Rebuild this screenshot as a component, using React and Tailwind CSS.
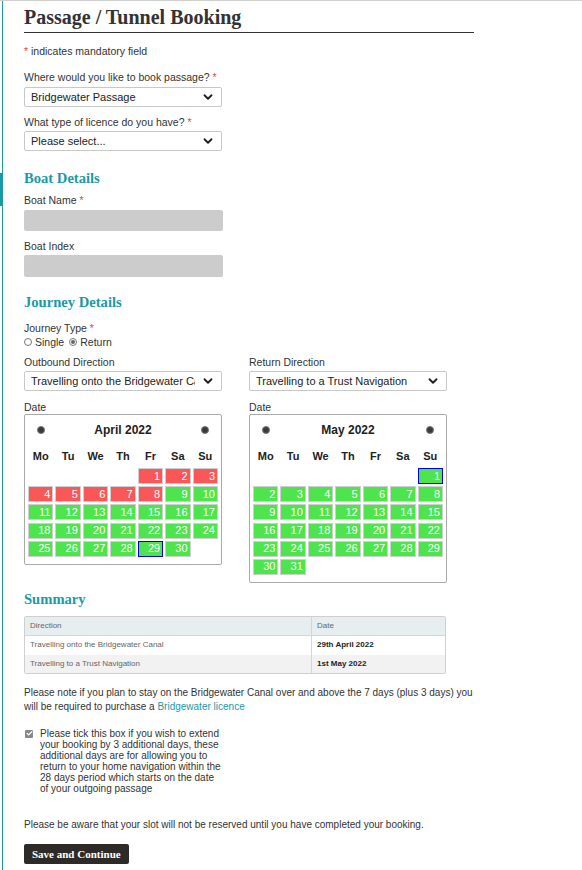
import { ChevronDown, Check } from "lucide-react";

const sans = { fontFamily: '"Liberation Sans", Arial, sans-serif' };
const serif = { fontFamily: '"Liberation Serif", "Times New Roman", serif' };

const Req = () => <span className="text-[#e4444c]">*</span>;

const Select = ({ value, className = "" }) => (
  <div
    className={`flex items-center justify-between h-[20px] border border-[#c8c8c8] rounded-[2px] bg-white pl-[6px] pr-[6px] text-[11px] text-[#222] ${className}`}
  >
    <span className="overflow-hidden whitespace-nowrap">{value}</span>
    <ChevronDown size={14} strokeWidth={3.2} className="shrink-0 text-[#222] ml-[6px]" />
  </div>
);

const NavDot = () => (
  <span className="inline-block w-[8px] h-[8px] rounded-full bg-[#3a3a3a] border border-[#777]" />
);

const DAYS = ["Mo", "Tu", "We", "Th", "Fr", "Sa", "Su"];

const Calendar = ({ title, offset, count, red = [], selected }) => {
  const cells = [];
  for (let i = 0; i < offset; i++) cells.push(null);
  for (let d = 1; d <= count; d++) cells.push(d);
  return (
    <div className="w-[198px] border border-[#aaa] rounded-[2px] bg-white px-[3px] pb-[7px]">
      <div className="flex items-center justify-between h-[29px] px-[9px]">
        <NavDot />
        <span className="text-[12px] font-bold text-[#222]">{title}</span>
        <NavDot />
      </div>
      <div className="grid grid-cols-7 gap-x-[2px] h-[24px] items-center text-[11px] font-bold text-[#222] text-center">
        {DAYS.map((d) => (
          <span key={d}>{d}</span>
        ))}
      </div>
      <div className="grid grid-cols-7 gap-x-[2px] gap-y-[2.2px]">
        {cells.map((d, i) =>
          d === null ? (
            <span key={i} className="h-[16px]" />
          ) : (
            <span
              key={i}
              className={`h-[16px] flex items-center justify-end pr-[2px] text-[11px] leading-none text-white border ${
                d === selected ? "border-[#0000ee]" : "border-[#cfcfcf]"
              } ${red.includes(d) ? "bg-[#fa5858]" : "bg-[#4de44d]"}`}
            >
              {d}
            </span>
          )
        )}
      </div>
    </div>
  );
};

export default function App() {
  return (
    <div className="relative min-h-[870px] bg-white border-t border-[#cfcfcf]" style={sans}>
      <div className="absolute left-[2px] top-0 bottom-0 w-px bg-[#1a9aa8]" />
      <div className="absolute left-0 top-[172px] h-[33px] w-[3px] bg-[#1a9aa8]" />

      <div className="pl-[24px] pr-[108px] text-[#333]">
        <h1
          className="mt-[4px] pb-[3px] leading-[24px] text-[20px] font-bold text-[#333] border-b border-[#333]"
          style={serif}
        >
          Passage / Tunnel Booking
        </h1>

        <p className="mt-[11px] text-[10.5px] leading-[14px]">
          <Req /> indicates mandatory field
        </p>

        <p className="mt-[12px] text-[10.5px] leading-[14px]">
          Where would you like to book passage? <Req />
        </p>
        <Select value="Bridgewater Passage" className="mt-[3px] w-[198px]" />

        <p className="mt-[8px] text-[10.5px] leading-[14px]">
          What type of licence do you have? <Req />
        </p>
        <Select value="Please select..." className="mt-[2px] w-[198px]" />

        <h2 className="mt-[18px] text-[14.6px] leading-[18px] font-bold text-[#1a9aa8]" style={serif}>
          Boat Details
        </h2>
        <p className="mt-[6px] text-[10.5px] leading-[14px]">
          Boat Name <Req />
        </p>
        <div className="mt-[3px] w-[199px] h-[21px] rounded-[2px] bg-[#cccccc]" />
        <p className="mt-[8px] text-[10.5px] leading-[14px]">Boat Index</p>
        <div className="mt-[2px] w-[199px] h-[22px] rounded-[2px] bg-[#cccccc]" />

        <h2 className="mt-[16px] text-[14.6px] leading-[18px] font-bold text-[#1a9aa8]" style={serif}>
          Journey Details
        </h2>
        <p className="mt-[10px] text-[10.5px] leading-[14px]">
          Journey Type <Req />
        </p>
        <div className="flex items-center gap-[3px] text-[10.5px] leading-[14px]">
          <span className="w-[8px] h-[8px] rounded-full border border-[#777] bg-white" />
          <span>Single</span>
          <span className="ml-[2px] w-[8px] h-[8px] rounded-full border border-[#777] bg-white flex items-center justify-center">
            <span className="w-[4px] h-[4px] rounded-full bg-[#666]" />
          </span>
          <span>Return</span>
        </div>

        <div className="mt-[6px] flex gap-[27px]">
          <div className="w-[198px]">
            <p className="text-[10.5px] leading-[14px]">Outbound Direction</p>
            <Select value="Travelling onto the Bridgewater Canal" className="mt-[2px]" />
            <p className="mt-[9px] text-[10.5px] leading-[14px]">Date</p>
            <div>
              <Calendar title="April 2022" offset={4} count={30} red={[1, 2, 3, 4, 5, 6, 7, 8]} selected={29} />
            </div>
          </div>
          <div className="w-[198px]">
            <p className="text-[10.5px] leading-[14px]">Return Direction</p>
            <Select value="Travelling to a Trust Navigation" className="mt-[2px]" />
            <p className="mt-[9px] text-[10.5px] leading-[14px]">Date</p>
            <div>
              <Calendar title="May 2022" offset={6} count={31} selected={1} />
            </div>
          </div>
        </div>

        <h2 className="mt-[7px] text-[14.6px] leading-[18px] font-bold text-[#1a9aa8]" style={serif}>
          Summary
        </h2>
        <table className="mt-[8px] w-[422px] border border-[#cfcfcf] border-separate border-spacing-0 rounded-[2px] text-[8px] text-[#666]">
          <tbody>
            <tr className="bg-[#e6eef0] h-[19px]">
              <td className="pl-[5px] w-[287px] border-r border-b border-[#d6d6d6]">Direction</td>
              <td className="pl-[5px] border-b border-[#d6d6d6]">Date</td>
            </tr>
            <tr className="bg-white h-[19px]">
              <td className="pl-[5px] border-r border-[#d6d6d6]">Travelling onto the Bridgewater Canal</td>
              <td className="pl-[5px] font-bold text-[#222]">29th April 2022</td>
            </tr>
            <tr className="bg-[#f2f2f2] h-[18px]">
              <td className="pl-[5px] border-r border-[#d6d6d6]">Travelling to a Trust Navigation</td>
              <td className="pl-[5px] font-bold text-[#222]">1st May 2022</td>
            </tr>
          </tbody>
        </table>

        <p className="mt-[12px] text-[10px] leading-[14px] whitespace-nowrap">
          Please note if you plan to stay on the Bridgewater Canal over and above the 7 days (plus 3 days) you
          <br />
          will be required to purchase a <span className="text-[#1a9aa8]">Bridgewater licence</span>
        </p>

        <div className="mt-[14px] flex items-start gap-[7px] pl-[1px]">
          <span className="mt-[2px] w-[8px] h-[8px] shrink-0 rounded-[1px] bg-[#888] flex items-center justify-center">
            <Check size={7} strokeWidth={4} className="text-white" />
          </span>
          <p className="w-[182px] text-[10px] leading-[11px]">
            Please tick this box if you wish to extend your booking by 3 additional days, these additional days
            are for allowing you to return to your home navigation within the 28 days period which starts on the
            date of your outgoing passage
          </p>
        </div>

        <p className="mt-[24px] text-[10px] leading-[14px]">
          Please be aware that your slot will not be reserved until you have completed your booking.
        </p>

        <button
          className="mt-[12px] h-[20px] px-[8px] rounded-[2px] bg-[#2e2a27] text-white text-[11px] font-bold"
          style={serif}
        >
          Save and Continue
        </button>
      </div>
    </div>
  );
}
